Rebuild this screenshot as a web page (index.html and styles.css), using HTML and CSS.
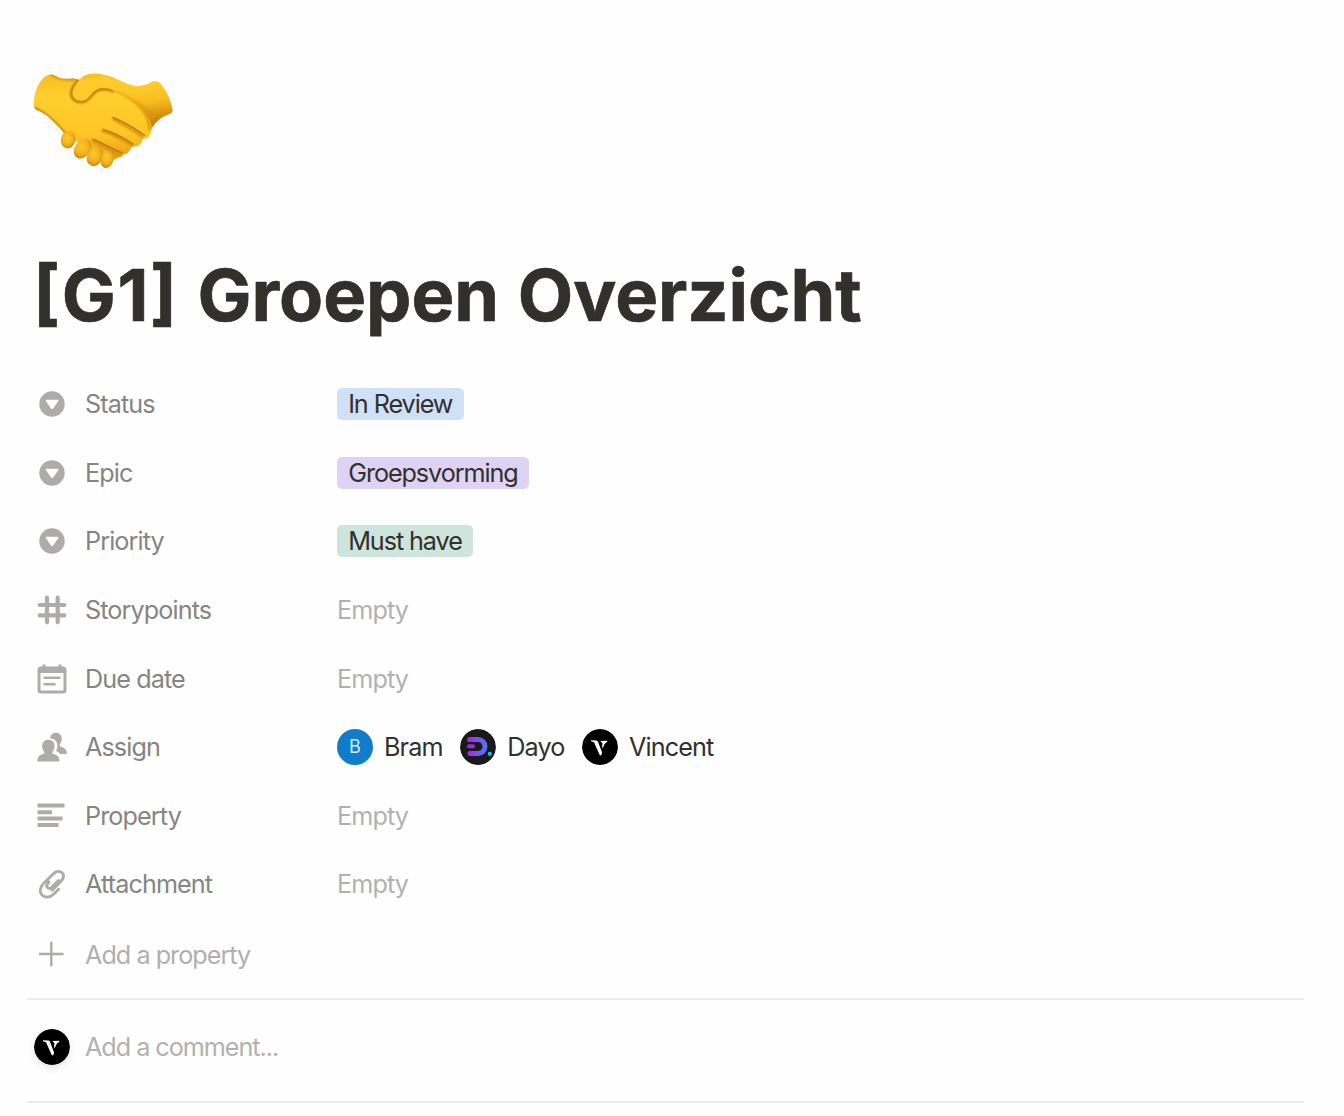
FILE: index.html
```html
<!DOCTYPE html>
<html lang="nl">
<head>
<meta charset="utf-8">
<title>[G1] Groepen Overzicht</title>
<link rel="stylesheet" href="styles.css">
</head>
<body>
<svg class="defs" width="0" height="0" aria-hidden="true">
  <defs>
    <symbol id="select" viewBox="0 0 30 30"><path fill-rule="evenodd" d="M15 2.300a12.700 12.700 0 1 0 0 25.400a12.700 12.700 0 0 0 0-25.400ZM9.500 10.800h11.200q1.200.3.500 1.500l-5 7.200q-1.100 1.200-2.200 0l-5-7.200q-.7-1.200.5-1.500Z"/></symbol>
    <symbol id="vlogo" viewBox="0 0 36 36"><circle cx="18" cy="18" r="18" fill="#000"/><path fill="#fff" d="M9 11.200l5.600.2q1 .3 1.500 1.600l4 10.500-.8 2.700h-1.500L12 13.300l-3-1.100ZM18.800 12l6.400-.2v1.100q-2 .7-3 2.800l-1.600 3.800-.6-2.500q1.300-3.700-1.200-4Z"/></symbol>
  </defs>
</svg>
<main class="page">
  <svg class="page-icon" viewBox="21 0 474 360" role="img" aria-label="Handshake">
    <defs>
      <linearGradient id="skin" x1="0" y1="0" x2="0" y2="1"><stop offset="0" stop-color="#f6bd20"/><stop offset=".25" stop-color="#ffcf2e"/><stop offset=".7" stop-color="#fec626"/><stop offset="1" stop-color="#e39b12"/></linearGradient>
      <linearGradient id="arm" x1="0" y1="0" x2=".25" y2="1"><stop offset="0" stop-color="#efb41c"/><stop offset=".3" stop-color="#ffce2e"/><stop offset=".65" stop-color="#f9bd20"/><stop offset="1" stop-color="#c98208"/></linearGradient>
      <radialGradient id="tip" cx=".45" cy=".4" r=".65"><stop offset="0" stop-color="#ffc92b"/><stop offset=".6" stop-color="#f3b11d"/><stop offset="1" stop-color="#c67d09"/></radialGradient>
      <filter id="soft" x="-20%" y="-20%" width="140%" height="140%"><feGaussianBlur stdDeviation="3"/></filter>
      <clipPath id="palm"><path d="M92 43C65 48 43 85 42 128Q39 145 52 151C77 160 96 180 120 205L142 231L290 280Q325 285 336 259Q364 263 368 237Q392 237 395 208C398 175 355 125 285 94C240 72 195 68 160 55Q125 61 100 44Z"/></clipPath>
    </defs>
    <path fill="url(#arm)" d="M180 57Q204 35 245 43C282 49 300 67 350 79Q377 78 398 64Q414 60 423 73Q449 104 458 149Q459 157 449 162C424 171 408 184 394 207L350 188Z"/>
    <path d="M275 85C315 122 355 135 390 185Q401 177 416 169L360 125Z" fill="#d99411" opacity=".45" filter="url(#soft)"/>
    <path fill="url(#skin)" d="M92 43C65 48 43 85 42 128Q39 145 52 151C77 160 96 180 120 205L142 231L180 250L250 292Q275 310 309 284Q325 285 336 259Q364 263 368 237Q392 237 395 208C398 175 355 125 285 94C240 72 195 68 160 55Q125 61 100 44Z"/>
    <g clip-path="url(#palm)" fill="none" filter="url(#soft)">
      <path d="M40 145Q82 161 140 230" stroke="#c98609" stroke-width="13"/>
      <path d="M94 44Q125 63 180 56M290 91Q389 138 389 211" stroke="#d5930e" stroke-width="8"/>
    </g>
    <g fill="url(#tip)">
      <path d="M139 214C157 209 170 224 165 243C163 259 150 268 137 264C119 259 117 223 139 214Z"/>
      <path d="M191 238C212 235 220 254 210 273C201 292 184 300 171 293C155 284 159 249 191 238Z"/>
      <path d="M230 258C252 262 250 288 241 306C234 320 217 322 206 311C192 298 207 257 230 258Z"/>
      <path d="M262 267C283 265 287 288 279 306C272 322 259 328 249 321C235 311 243 274 262 267Z"/>
    </g>
    <g fill="none" stroke-linecap="round">
      <g filter="url(#soft)" stroke="#d48d0b" stroke-width="9">
        <path d="M281 177C319 197 342 210 366 229M249 213C280 219 309 239 336 256M219 243C245 250 274 278 304 285"/>
      </g>
      <path d="M279 173C315 187 346 206 373 226M249 209C280 218 309 232 338 252M219 238C245 246 278 269 306 278" stroke="#bd7807" stroke-width="4"/>
    </g>
    <path d="M178 60Q150 85 154 105Q162 129 191 125C211 120 214 96 240 88Q262 84 283 94" fill="none" stroke="#b87305" stroke-width="8" filter="url(#soft)"/>
    <path fill="#ffcb2a" d="M181 57Q203 37 240 44C279 51 300 75 326 80L284 92Q254 78 235 86C211 94 209 116 191 121Q164 125 158 104Q155 84 181 57Z"/>
    <path d="M188 57Q207 45 239 49" fill="none" stroke="#efb61d" stroke-width="5" filter="url(#soft)"/>
  </svg>

  <h1 class="title"><span class="code">[G1]</span> Groepen Overzicht</h1>

  <section class="properties">
    <div class="row"><svg class="icon"><use href="#select"/></svg><span class="label">Status</span><span class="tag blue">In Review</span></div>
    <div class="row"><svg class="icon"><use href="#select"/></svg><span class="label">Epic</span><span class="tag purple">Groepsvorming</span></div>
    <div class="row"><svg class="icon"><use href="#select"/></svg><span class="label">Priority</span><span class="tag green">Must have</span></div>
    <div class="row"><svg class="icon" viewBox="0 0 30 30"><path class="line" stroke-width="4.200" stroke-linecap="round" d="M10 2.700v24.600M20.700 2.700v24.600M2.700 10h24.600M2.700 20.400h24.600"/></svg><span class="label">Storypoints</span><span class="empty">Empty</span></div>
    <div class="row"><svg class="icon" viewBox="0 0 30 30"><path fill-rule="evenodd" d="M5.500.5h3v2h13v-2h3v2h1.300Q29.500 2.500 29.500 6v20q0 3.500-3.500 3.500H4Q.5 29.500.5 26V6Q.5 2.500 4 2.500h1.500ZM3.500 9v16.300q0 1.300 1.300 1.300h20.400q1.300 0 1.300-1.300V9Z"/><path class="line" stroke-width="2.600" d="M6.500 13.700h17M6.500 20.200H18.500"/></svg><span class="label">Due date</span><span class="empty">Empty</span></div>
    <div class="row"><svg class="icon" viewBox="0 0 30 30"><path d="M13 6.200c.5-3.300 2.800-5.500 6-5.500 3.500 0 5.900 2.600 5.800 6.200-.1 2.200-.9 4-2 5.300v1.800c1 .9 2.500 1.200 4.200 2.100 2 1.100 2.800 3 2.900 6h-6.500c-1.300-1.600-3-2.400-4.300-3.100 1.200-2.600 1.500-5 1.100-7.100-.6-3.400-3.200-5.500-7.200-5.700Z"/><path d="M11.300 7.800c3.900 0 6.300 2.500 6.300 6.200 0 2.300-.8 4.500-2.200 5.800v1.800c3.600 1.300 7 2.300 7.100 7.900H.3c0-5.600 3.400-6.600 7-7.900v-1.800C5.900 18.500 5.100 16.300 5.100 14c0-3.700 2.400-6.200 6.200-6.200Z"/></svg><span class="label">Assign</span>
      <div class="people">
        <span class="person"><span class="avatar initial">B</span>Bram</span>
        <span class="person"><svg class="avatar" viewBox="0 0 36 36"><defs><linearGradient id="dg" gradientUnits="userSpaceOnUse" x1="7" y1="0" x2="28" y2="0"><stop offset="0" stop-color="#b51be9"/><stop offset=".4" stop-color="#8a48f0"/><stop offset="1" stop-color="#447df0"/></linearGradient></defs><circle cx="18" cy="18" r="18" fill="#19191b"/><path d="M9.500 10.500H18a7 7 0 0 1 0 14H10" fill="none" stroke="url(#dg)" stroke-width="5" stroke-linecap="round"/><path d="M9 17.300h4" stroke="#9a2bdc" stroke-width="4" stroke-linecap="round"/><circle cx="29.800" cy="24.800" r="2.100" fill="#18c4df"/></svg>Dayo</span>
        <span class="person"><svg class="avatar"><use href="#vlogo"/></svg>Vincent</span>
      </div></div>
    <div class="row"><svg class="icon" viewBox="0 0 30 30"><path class="line" stroke-width="4" d="M.5 4.500h27M.5 11.200h14.500M.5 17.600h25M.5 24.100h21"/></svg><span class="label">Property</span><span class="empty">Empty</span></div>
    <div class="row"><svg class="icon" viewBox="0 0 30 30"><path class="line" stroke-width="2.900" stroke-linecap="round" d="M12 13l-1.300 1.600c-2.500 3.400 1 6.500 4.200 3.500l6.600-6.500M15.200 21.300l9.200-9.500c6-6.700-2-13-8-7.100L6.300 14.700c-8.500 9 2.400 18.500 10.500 10.200l4.800-4.700"/></svg><span class="label">Attachment</span><span class="empty">Empty</span></div>
    <div class="row add"><svg class="icon" viewBox="0 0 30 30"><path class="line" stroke-width="2.400" d="M2 14h24.500M14.300 1.800v24.500"/></svg><span class="label">Add a property</span></div>
  </section>

  <section class="comment"><svg class="avatar"><use href="#vlogo"/></svg><span>Add a comment...</span></section>
</main>
</body>
</html>
```
FILE: styles.css
```css
* { box-sizing: border-box; }
body { margin: 0; background: #fefefe; font-family: Inter, "Liberation Sans", sans-serif; color: #32302c; }
.defs { position: absolute; }
.page { display: flex; flex-direction: column; height: 1116px; padding: 60px 40px 0 27px; }
.page-icon { width: 158px; height: 120px; flex: none; }
.title { margin: 72px 0 32px 6px; font-size: 72px; line-height: 86px; font-weight: 700; font-feature-settings: "case"; -webkit-text-stroke: .7px #32302a; letter-spacing: 0; word-spacing: 1.600px; white-space: nowrap; color: #32302a; }
.code { letter-spacing: 1.600px; }
.properties { padding-left: 10px; height: 630px; flex: none; border-bottom: 2px solid #ebebea; font-size: 25.2px; }
.row { display: flex; align-items: center; height: 68.6px; }
.icon { width: 30px; height: 30px; margin-right: 18px; flex: none; fill: #adaca9; }
.line { fill: none; stroke: #adaca9; }
.label { width: 252px; color: #868582; letter-spacing: -.9px; white-space: nowrap; }
.tag { height: 32px; padding: 0 11.200px; border-radius: 5px; line-height: 32px; letter-spacing: -1.08px; white-space: nowrap; }
.blue { background: #cee1f6; }
.purple { background: #dfd3f5; }
.green { background: #cee5dd; }
.empty { color: #b2b1af; letter-spacing: -.9px; }
.people { display: flex; gap: 17.700px; }
.person { display: flex; align-items: center; gap: 11px; letter-spacing: -.9px; }
.avatar { width: 36px; height: 36px; flex: none; border-radius: 50%; }
.initial { background: #0f7dca; color: #d4e9f7; font-size: 18px; line-height: 36px; text-align: center; letter-spacing: 0; }
.add { height: 72px; }
.add .label { color: #b0afad; letter-spacing: -.98px; }
.comment { display: flex; align-items: center; gap: 15px; height: 103px; padding: 0 0 7px 7px; flex: none; border-bottom: 2px solid #ebebea; color: #b2b1af; font-size: 25.2px; letter-spacing: -1.03px; }
.comment .avatar { box-shadow: 0 3px 7px rgba(0, 0, 0, .1); }
```
